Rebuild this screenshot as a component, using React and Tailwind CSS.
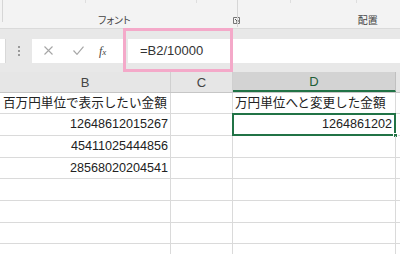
import React from 'react';

const rows = [
    { h: 'h-[21px]', b: '百万円単位で表示したい金額', bLeft: true, d: '万円単位へと変更した金額', dLeft: true },
    { h: 'h-[22px]', b: '12648612015267', d: '1264861202', selected: true },
    { h: 'h-[22px]', b: '45411025444856' },
    { h: 'h-[21px]', b: '28568020204541' },
    { h: 'h-[22px]' },
    { h: 'h-[22px]' },
    { h: 'h-[21px]' },
    { h: 'h-[22px]' },
];

const font = "font-['Liberation_Sans','Noto_Sans_CJK_JP',sans-serif]";

const App = () => {
    return (
        <main className={`w-[400px] h-[254px] overflow-hidden bg-white text-[#222] ${font}`}>
            {/* ribbon */}
            <div className="relative h-[29px] bg-[#f3f3f3] border-b border-[#dadada]">
                <div className="absolute left-[2px] top-0 h-[22px] w-px bg-[#d6d6d6]" />
                <div className="absolute left-[237px] top-0 h-[27px] w-px bg-[#d6d6d6]" />
                <div className="absolute left-[85px] top-0 h-[3px] w-px bg-[#dedede]" />
                <div className="absolute left-[196px] top-0 h-[3px] w-px bg-[#dedede]" />
                <div className="absolute left-[290px] top-0 h-[3px] w-px bg-[#dedede]" />
                <div className="absolute left-[356px] top-0 h-[3px] w-px bg-[#dedede]" />
                <div className="flex h-full items-end pb-[3px] text-[10px] leading-none text-[#444] font-['Noto_Sans_CJK_JP',sans-serif] [font-feature-settings:'palt']">
                    <span className="ml-[98px]">フォント</span>
                    <svg className="ml-[102px] mb-[1px]" width="7" height="7" viewBox="0 0 7 7">
                        <path d="M0.5 6.5V0.5h6v6z" fill="none" stroke="#777" strokeWidth="1" />
                        <path d="M2 2l3 3M5 3v2H3" fill="none" stroke="#555" strokeWidth="1" />
                    </svg>
                    <span className="ml-[118px]">配置</span>
                </div>
            </div>

            {/* formula bar */}
            <div className="relative flex h-[43px] items-center bg-[#e8e8e8]">
                <div className="h-[24px] w-[6px] bg-white border-r border-[#d8d8d8]" />
                <div className="ml-[12px] flex w-[3px] flex-col gap-[2px]">
                    <span className="h-[2px] w-[2px] bg-[#9a9a9a]" />
                    <span className="h-[2px] w-[2px] bg-[#9a9a9a]" />
                    <span className="h-[2px] w-[2px] bg-[#9a9a9a]" />
                </div>
                <div className="ml-[11px] flex h-[24px] w-[91px] items-center bg-white">
                    <svg className="ml-[12px]" width="9" height="9" viewBox="0 0 9 9">
                        <path d="M0.5 0.5l8 8M8.5 0.5l-8 8" stroke="#a6a6a6" strokeWidth="1.1" fill="none" />
                    </svg>
                    <svg className="ml-[20px]" width="11" height="9" viewBox="0 0 11 9">
                        <path d="M0.5 4.5l3.5 3.8L10.5 0.6" stroke="#a6a6a6" strokeWidth="1.2" fill="none" />
                    </svg>
                    <span className="ml-[15px] text-[12px] italic leading-none text-[#444] font-['Liberation_Serif',serif]">
                        f<span className="text-[9px]">x</span>
                    </span>
                </div>
                <div className="ml-[5px] flex h-[24px] flex-1 items-center bg-white pl-[12px] text-[13px] text-[#333]">
                    =B2/10000
                </div>
                <div className="absolute left-[123px] top-[-1px] h-[44px] w-[110px] border-[3px] border-[#f4a9c9]" />
            </div>

            {/* column headers */}
            <div className="flex h-[21px] border-b border-[#c6c6c6] bg-[#e6e6e6] text-[13px] leading-none text-[#444]">
                <div className="flex w-[171px] items-center justify-center border-r border-[#d0d0d0]">B</div>
                <div className="flex w-[62px] items-center justify-center border-r border-[#d0d0d0]">C</div>
                <div className="flex w-[163px] items-center justify-center border-r border-b-2 border-r-[#c0c0c0] border-b-[#217346] bg-[#d3d3d3] text-[#1d5e38]">D</div>
                <div className="flex-1" />
            </div>

            {/* cells */}
            {rows.map((r, i) => (
                <div key={i} className={`flex ${r.h} border-b border-[#dadada] text-[12.6px] leading-none`}>
                    <div className={`flex w-[171px] items-center border-r border-[#dadada] ${r.bLeft ? 'justify-start pl-[3px]' : 'justify-end pr-[2px]'}`}>
                        {r.b}
                    </div>
                    <div className="w-[62px] border-r border-[#dadada]" />
                    <div className={`relative flex w-[163px] items-center border-r border-[#dadada] ${r.dLeft ? 'justify-start pl-[2px]' : 'justify-end pr-[3px]'}`}>
                        {r.d}
                        {r.selected && (
                            <>
                                <div className="absolute left-[-1px] top-[-1px] h-[23px] w-[164px] border-2 border-[#217346]" />
                                <div className="absolute right-[-3px] bottom-[-3px] h-[5px] w-[5px] border border-white bg-[#217346]" />
                            </>
                        )}
                    </div>
                    <div className="flex-1" />
                </div>
            ))}
        </main>
    );
};

export default App;
